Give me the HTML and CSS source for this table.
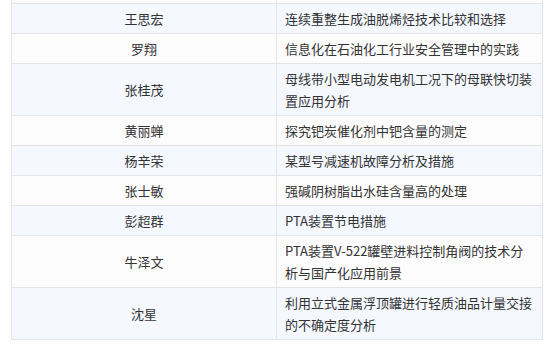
FILE: index.html
```
<!DOCTYPE html>
<html lang="zh-CN">
<head>
	<meta charset="utf-8" />
	<title>论文列表</title>
	<link rel="stylesheet" href="styles.css">
</head>
<body>
<div id="lista">
<table class="tabla">
	<tr class="cortada"><td class="nombre"></td><td class="tema"></td></tr>
	<tr class="azul"><td class="nombre">王思宏</td><td class="tema">连续重整生成油脱烯烃技术比较和选择</td></tr>
	<tr><td class="nombre">罗翔</td><td class="tema">信息化在石油化工行业安全管理中的实践</td></tr>
	<tr class="azul"><td class="nombre">张桂茂</td><td class="tema">母线带小型电动发电机工况下的母联快切装置应用分析</td></tr>
	<tr><td class="nombre">黄丽蝉</td><td class="tema">探究钯炭催化剂中钯含量的测定</td></tr>
	<tr class="azul"><td class="nombre">杨辛荣</td><td class="tema">某型号减速机故障分析及措施</td></tr>
	<tr><td class="nombre">张士敏</td><td class="tema">强碱阴树脂出水硅含量高的处理</td></tr>
	<tr class="azul"><td class="nombre">彭超群</td><td class="tema">PTA装置节电措施</td></tr>
	<tr><td class="nombre">牛泽文</td><td class="tema">PTA装置V-522罐壁进料控制角阀的技术分析与国产化应用前景</td></tr>
	<tr class="azul"><td class="nombre">沈星</td><td class="tema">利用立式金属浮顶罐进行轻质油品计量交接的不确定度分析</td></tr>
</table>
</div>
</body>
</html>
```

FILE: styles.css
```
body {
	margin: 0;
	background-color: #fff;
	font-family: "Microsoft YaHei", "Noto Sans CJK SC", sans-serif;
	font-size: 13px;
	color: #333;
}
#lista {
	padding-left: 11px;
	width: 532px;
	overflow: hidden;
}
.tabla {
	width: 532px;
	border-collapse: collapse;
	table-layout: fixed;
	margin-top: -27px;
}
.tabla td {
	border: 1px solid #e4e4e4;
	padding: 4px 8px 3px;
	line-height: 22px;
	vertical-align: middle;
	background-color: #fcfcfc;
}
.tabla .azul td {
	background-color: #f5f9ff;
}
.nombre {
	width: 248px;
	text-align: center;
}
.tema {
	text-align: left;
}
.cortada td {
	height: 22px;
}
```
